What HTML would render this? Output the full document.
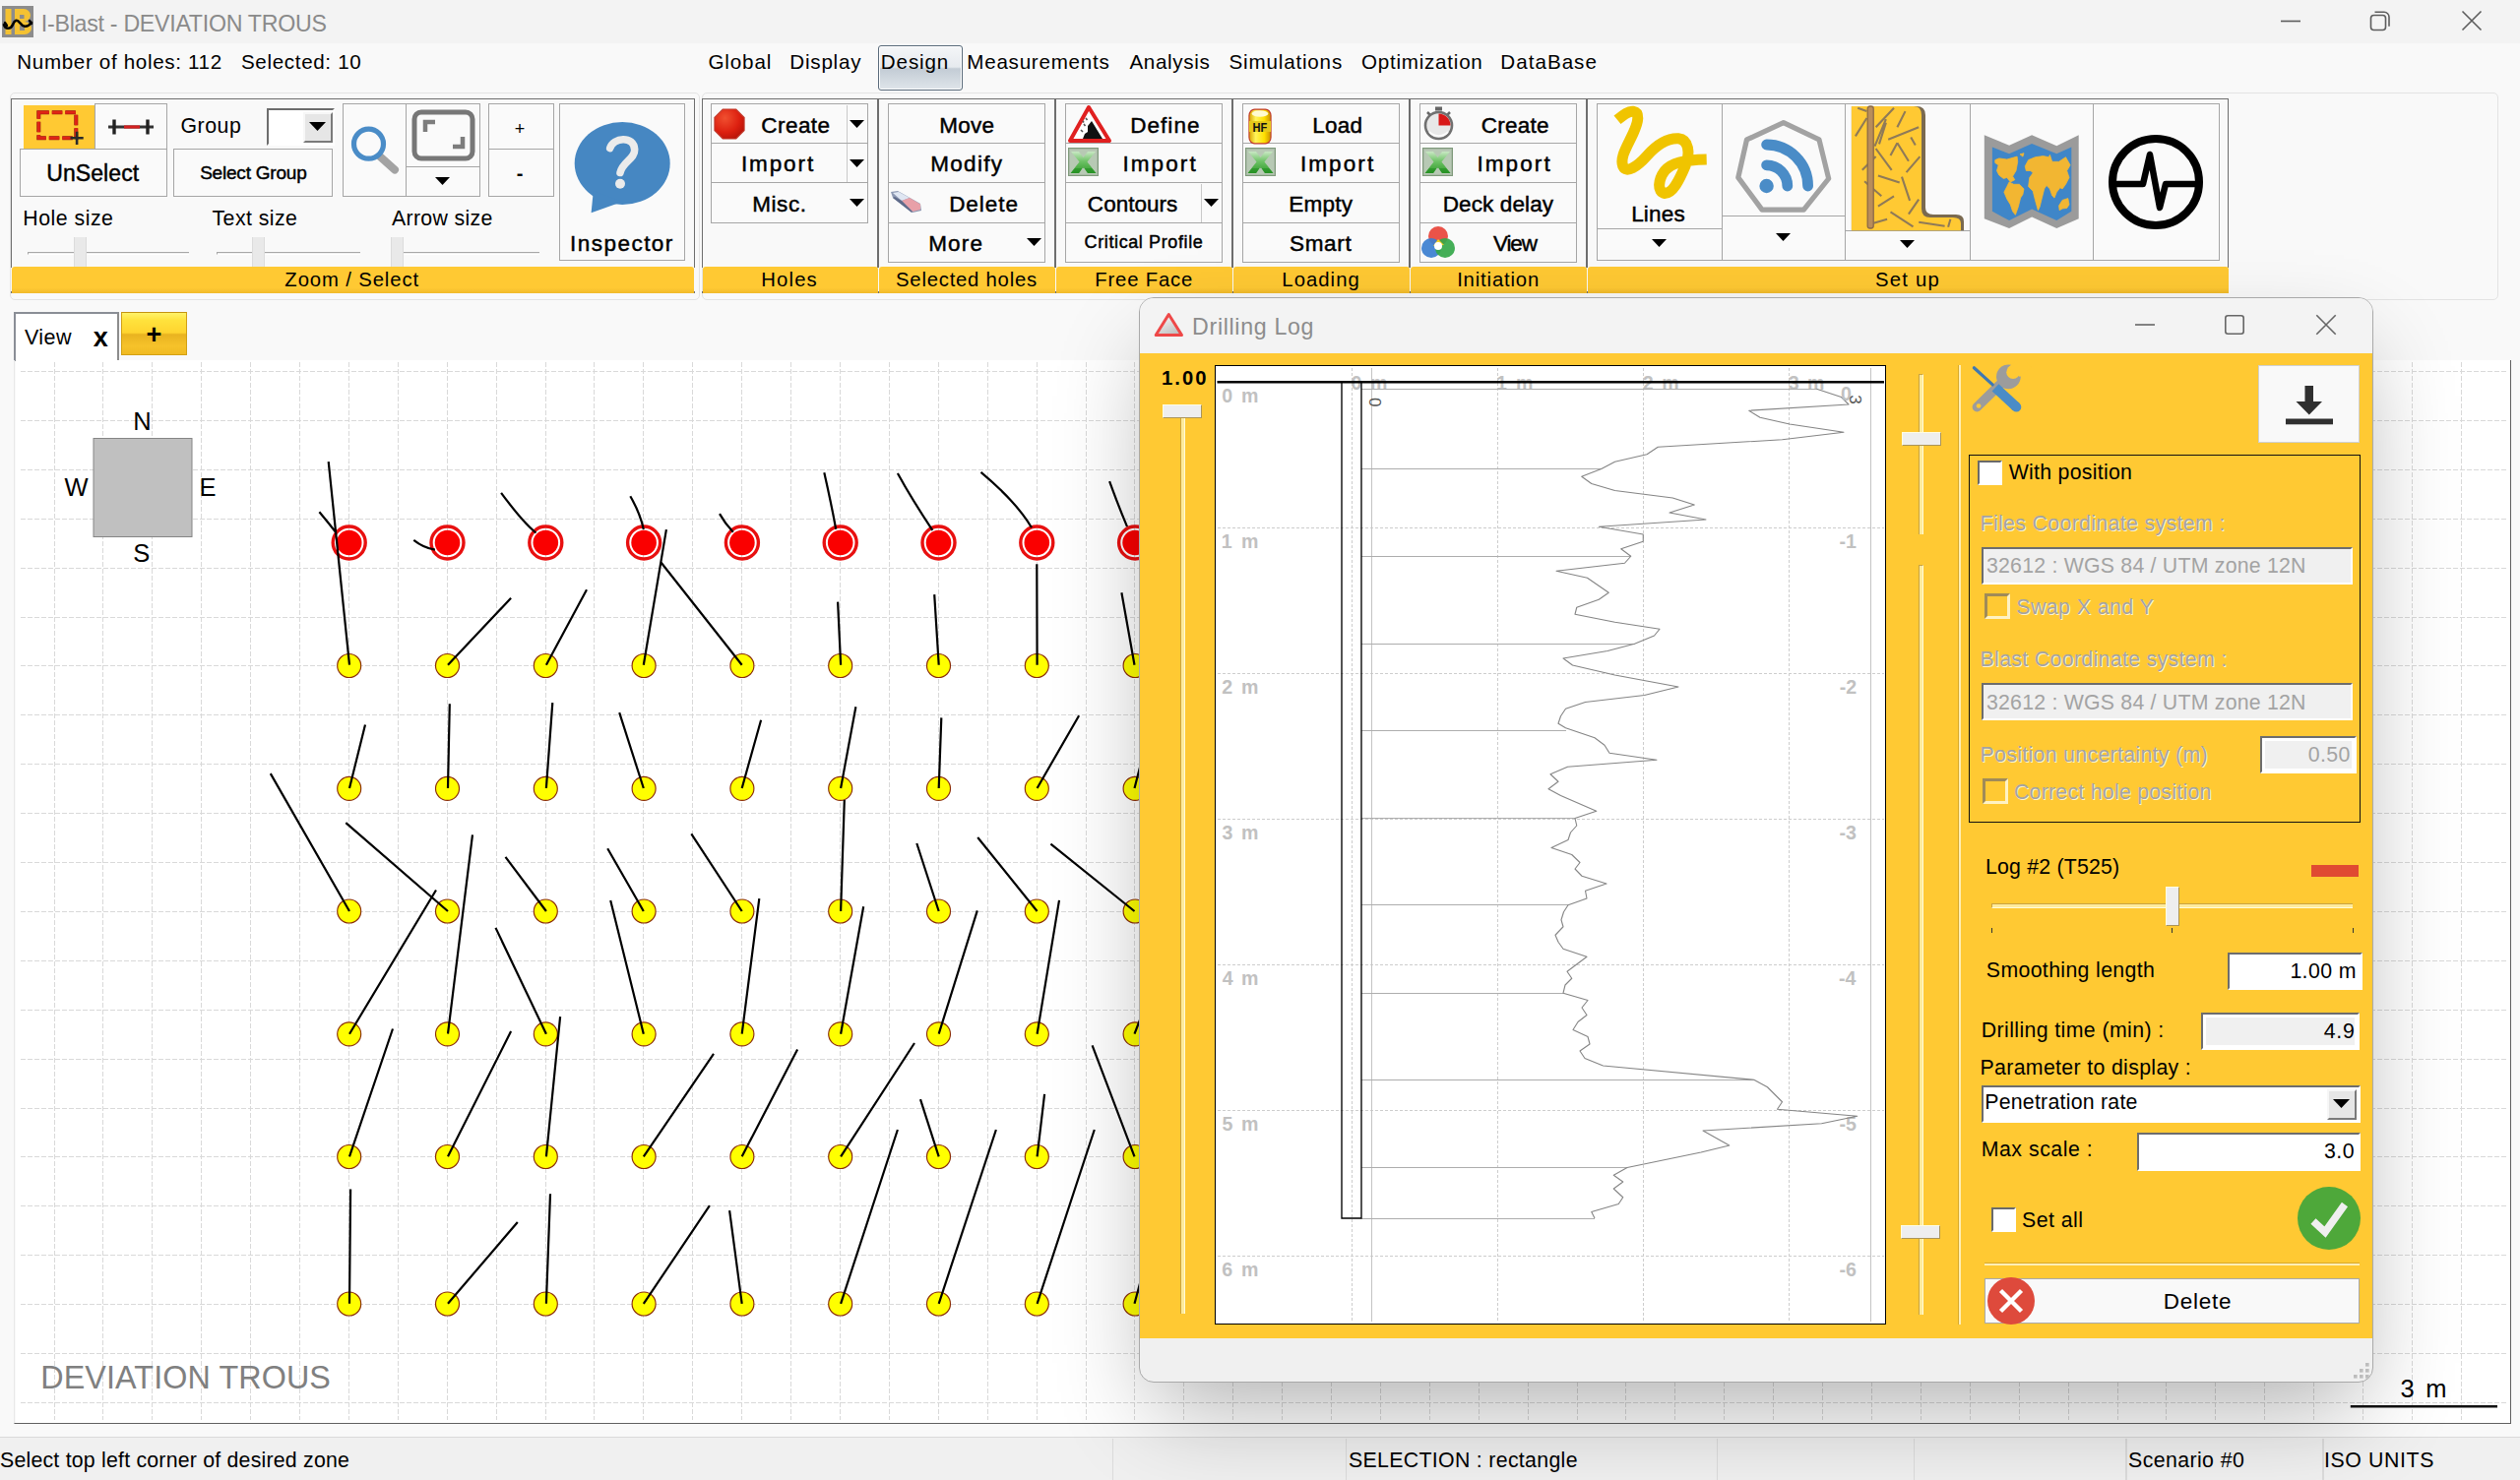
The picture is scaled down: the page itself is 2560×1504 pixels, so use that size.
<!DOCTYPE html><html><head><meta charset="utf-8"><title>I-Blast</title><style>html,body{margin:0;padding:0}body{width:2560px;height:1504px;position:relative;overflow:hidden;font-family:"Liberation Sans",sans-serif;background:#f9f9f9}</style></head><body>
<div style="position:absolute;left:0.00px;top:0.00px;width:2560.00px;height:44.00px;background:#f3f3f3;"></div>
<svg style="position:absolute;left:2.00px;top:6.00px;" width="32.00" height="32.00" viewBox="0 0 32 32" preserveAspectRatio="none"><rect x="0" y="0" width="32" height="32" fill="#8c8c8c"/><rect x="3.5" y="3" width="6" height="26" fill="#f5c232"/><path d="M13 3 h9 a7 6.5 0 0 1 0 13 h-9 z M13 16 h10 a7 6.5 0 0 1 0 13 h-10 z" fill="#f5c232"/><path d="M18 9 h4.5 v4 h-4.5 z M18 20 h5 v5 h-5 z" fill="#8c8c8c"/><path d="M2 19 c1 5 7 5 9 0 c1.5 -4 4 -6 7 -2 c3 4 7 6 12 0" fill="none" stroke="#000" stroke-width="2.6" stroke-linecap="round"/><path d="M3 17 l2 3 M28 15 l2 3" fill="none" stroke="#000" stroke-width="2.4" stroke-linecap="round"/></svg>
<span style="position:absolute;left:41.86px;top:11.00px;font-size:23.20px;font-weight:400;color:#8a8a8a;letter-spacing:-0.279px;white-space:pre;line-height:normal;">I-Blast - DEVIATION TROUS</span>
<svg style="position:absolute;left:2310.00px;top:5.00px;" width="240.00" height="34.00" viewBox="0 0 240 34" preserveAspectRatio="none"><path d="M7 16.5 h20" stroke="#5c5c5c" stroke-width="1.6" fill="none"/><rect x="98.5" y="10.5" width="15" height="15" rx="3" fill="none" stroke="#5c5c5c" stroke-width="1.6"/><path d="M102.5 7.3 h9.5 a5 5 0 0 1 5 5 v9.5" fill="none" stroke="#5c5c5c" stroke-width="1.6"/><path d="M191.5 6.5 l19 19 M210.5 6.5 l-19 19" stroke="#5c5c5c" stroke-width="1.6" fill="none"/></svg>
<div style="position:absolute;left:0.00px;top:44.00px;width:2560.00px;height:1460.00px;background:#f9f9f9;"></div>
<span style="position:absolute;left:17.31px;top:51.36px;font-size:20.60px;font-weight:400;color:#000;letter-spacing:0.658px;white-space:pre;line-height:normal;">Number of holes: 112   Selected: 10</span>
<div style="position:absolute;left:892.00px;top:45.50px;width:86.00px;height:46.50px;box-sizing:border-box;border:1.5px solid #5a6b7b;border-radius:3px;background:linear-gradient(#f4f6f8 0%,#e6eaee 48%,#c3ccd5 52%,#dfe5ea 100%);box-shadow:inset 0 0 0 1px #fff;"></div>
<span style="position:absolute;left:719.46px;top:51.36px;font-size:20.60px;font-weight:400;color:#000;letter-spacing:0.873px;white-space:pre;line-height:normal;">Global</span>
<span style="position:absolute;left:802.31px;top:51.36px;font-size:20.60px;font-weight:400;color:#000;letter-spacing:0.781px;white-space:pre;line-height:normal;">Display</span>
<span style="position:absolute;left:894.81px;top:51.36px;font-size:20.60px;font-weight:400;color:#000;letter-spacing:0.881px;white-space:pre;line-height:normal;">Design</span>
<span style="position:absolute;left:982.31px;top:51.36px;font-size:20.60px;font-weight:400;color:#000;letter-spacing:0.745px;white-space:pre;line-height:normal;">Measurements</span>
<span style="position:absolute;left:1147.46px;top:51.36px;font-size:20.60px;font-weight:400;color:#000;letter-spacing:0.654px;white-space:pre;line-height:normal;">Analysis</span>
<span style="position:absolute;left:1248.56px;top:51.36px;font-size:20.60px;font-weight:400;color:#000;letter-spacing:0.820px;white-space:pre;line-height:normal;">Simulations</span>
<span style="position:absolute;left:1383.02px;top:51.36px;font-size:20.60px;font-weight:400;color:#000;letter-spacing:0.757px;white-space:pre;line-height:normal;">Optimization</span>
<span style="position:absolute;left:1524.31px;top:51.36px;font-size:20.60px;font-weight:400;color:#000;letter-spacing:1.020px;white-space:pre;line-height:normal;">DataBase</span>
<div style="position:absolute;left:10.00px;top:93.50px;width:701.00px;height:211.00px;box-sizing:border-box;border:1.5px solid #e3e3e3;border-radius:5px;background:#f9f9f9;"></div>
<div style="position:absolute;left:712.50px;top:93.50px;width:1825.00px;height:211.00px;box-sizing:border-box;border:1.5px solid #e3e3e3;border-radius:5px;background:#f9f9f9;"></div>
<div style="position:absolute;left:10.50px;top:99.50px;width:695.00px;height:172.00px;box-sizing:border-box;border:1.5px solid #6e6e6e;border-bottom:none;"></div>
<div style="position:absolute;left:10.50px;top:295.50px;width:1.50px;height:2.50px;background:#6e6e6e;"></div>
<div style="position:absolute;left:704.00px;top:295.50px;width:1.50px;height:2.50px;background:#6e6e6e;"></div>
<div style="position:absolute;left:11.70px;top:270.50px;width:693.40px;height:27.00px;background:linear-gradient(#ffc933 0%,#ffc933 80%,#f0b92a 100%);border-radius:3px 3px 0 0;"></div>
<span style="position:absolute;left:289.36px;top:272.63px;font-size:20.30px;font-weight:400;color:#000;letter-spacing:0.880px;white-space:pre;line-height:normal;">Zoom / Select</span>
<div style="position:absolute;left:713.00px;top:99.50px;width:179.00px;height:172.00px;box-sizing:border-box;border:1.5px solid #6e6e6e;border-bottom:none;"></div>
<div style="position:absolute;left:713.00px;top:295.50px;width:1.50px;height:2.50px;background:#6e6e6e;"></div>
<div style="position:absolute;left:890.50px;top:295.50px;width:1.50px;height:2.50px;background:#6e6e6e;"></div>
<div style="position:absolute;left:714.20px;top:270.50px;width:177.40px;height:27.00px;background:linear-gradient(#ffc933 0%,#ffc933 80%,#f0b92a 100%);border-radius:3px 3px 0 0;"></div>
<span style="position:absolute;left:773.33px;top:272.63px;font-size:20.30px;font-weight:400;color:#000;letter-spacing:1.125px;white-space:pre;line-height:normal;">Holes</span>
<div style="position:absolute;left:892.00px;top:99.50px;width:180.00px;height:172.00px;box-sizing:border-box;border:1.5px solid #6e6e6e;border-bottom:none;"></div>
<div style="position:absolute;left:892.00px;top:295.50px;width:1.50px;height:2.50px;background:#6e6e6e;"></div>
<div style="position:absolute;left:1070.50px;top:295.50px;width:1.50px;height:2.50px;background:#6e6e6e;"></div>
<div style="position:absolute;left:893.20px;top:270.50px;width:178.40px;height:27.00px;background:linear-gradient(#ffc933 0%,#ffc933 80%,#f0b92a 100%);border-radius:3px 3px 0 0;"></div>
<span style="position:absolute;left:910.08px;top:272.63px;font-size:20.30px;font-weight:400;color:#000;letter-spacing:0.768px;white-space:pre;line-height:normal;">Selected holes</span>
<div style="position:absolute;left:1072.00px;top:99.50px;width:180.00px;height:172.00px;box-sizing:border-box;border:1.5px solid #6e6e6e;border-bottom:none;"></div>
<div style="position:absolute;left:1072.00px;top:295.50px;width:1.50px;height:2.50px;background:#6e6e6e;"></div>
<div style="position:absolute;left:1250.50px;top:295.50px;width:1.50px;height:2.50px;background:#6e6e6e;"></div>
<div style="position:absolute;left:1073.20px;top:270.50px;width:178.40px;height:27.00px;background:linear-gradient(#ffc933 0%,#ffc933 80%,#f0b92a 100%);border-radius:3px 3px 0 0;"></div>
<span style="position:absolute;left:1112.33px;top:272.63px;font-size:20.30px;font-weight:400;color:#000;letter-spacing:0.820px;white-space:pre;line-height:normal;">Free Face</span>
<div style="position:absolute;left:1252.00px;top:99.50px;width:180.00px;height:172.00px;box-sizing:border-box;border:1.5px solid #6e6e6e;border-bottom:none;"></div>
<div style="position:absolute;left:1252.00px;top:295.50px;width:1.50px;height:2.50px;background:#6e6e6e;"></div>
<div style="position:absolute;left:1430.50px;top:295.50px;width:1.50px;height:2.50px;background:#6e6e6e;"></div>
<div style="position:absolute;left:1253.20px;top:270.50px;width:178.40px;height:27.00px;background:linear-gradient(#ffc933 0%,#ffc933 80%,#f0b92a 100%);border-radius:3px 3px 0 0;"></div>
<span style="position:absolute;left:1302.33px;top:272.63px;font-size:20.30px;font-weight:400;color:#000;letter-spacing:1.037px;white-space:pre;line-height:normal;">Loading</span>
<div style="position:absolute;left:1432.00px;top:99.50px;width:180.00px;height:172.00px;box-sizing:border-box;border:1.5px solid #6e6e6e;border-bottom:none;"></div>
<div style="position:absolute;left:1432.00px;top:295.50px;width:1.50px;height:2.50px;background:#6e6e6e;"></div>
<div style="position:absolute;left:1610.50px;top:295.50px;width:1.50px;height:2.50px;background:#6e6e6e;"></div>
<div style="position:absolute;left:1433.20px;top:270.50px;width:178.40px;height:27.00px;background:linear-gradient(#ffc933 0%,#ffc933 80%,#f0b92a 100%);border-radius:3px 3px 0 0;"></div>
<span style="position:absolute;left:1480.13px;top:272.63px;font-size:20.30px;font-weight:400;color:#000;letter-spacing:0.842px;white-space:pre;line-height:normal;">Initiation</span>
<div style="position:absolute;left:1612.00px;top:99.50px;width:652.00px;height:172.00px;box-sizing:border-box;border:1.5px solid #6e6e6e;border-bottom:none;"></div>
<div style="position:absolute;left:1612.00px;top:295.50px;width:1.50px;height:2.50px;background:#6e6e6e;"></div>
<div style="position:absolute;left:2262.50px;top:295.50px;width:1.50px;height:2.50px;background:#6e6e6e;"></div>
<div style="position:absolute;left:1613.20px;top:270.50px;width:650.40px;height:27.00px;background:linear-gradient(#ffc933 0%,#ffc933 80%,#f0b92a 100%);border-radius:3px 3px 0 0;"></div>
<span style="position:absolute;left:1905.08px;top:272.63px;font-size:20.30px;font-weight:400;color:#000;letter-spacing:1.217px;white-space:pre;line-height:normal;">Set up</span>
<div style="position:absolute;left:24.00px;top:107.00px;width:72.00px;height:44.00px;background:#ffc933;"></div>
<svg style="position:absolute;left:24.00px;top:107.00px;" width="72.00" height="44.00" viewBox="0 0 72 44" preserveAspectRatio="none"><rect x="15.3" y="7.3" width="38" height="26" fill="none" stroke="#8a1a10" stroke-width="4" stroke-dasharray="10.5 3"/><rect x="15.3" y="7.3" width="38" height="26" fill="none" stroke="#e02414" stroke-width="3" stroke-dasharray="10.5 3"/><path d="M47.5 33.3 h13.2 M54.1 26.7 v13.2" stroke="#2a2a2a" stroke-width="2.6" fill="none"/></svg>
<div style="position:absolute;left:96.00px;top:105.00px;width:74.00px;height:47.00px;box-sizing:border-box;border:1px solid #a6a6a6;background:#fafafa;"></div>
<svg style="position:absolute;left:96.00px;top:105.50px;" width="73.50" height="45.50" viewBox="0 0 73.5 45.5" preserveAspectRatio="none"><path d="M14 23 h46" stroke="#333" stroke-width="3" fill="none"/><path d="M30 23 h16" stroke="#d32020" stroke-width="3.2" fill="none"/><path d="M20 15.5 v15 M54 15.5 v15" stroke="#222" stroke-width="3.4" fill="none"/></svg>
<div style="position:absolute;left:20.00px;top:151.00px;width:150.00px;height:49.00px;box-sizing:border-box;border:1px solid #a6a6a6;background:#fafafa;"></div>
<span style="position:absolute;left:47.23px;top:163.19px;font-size:23.00px;font-weight:400;color:#000;letter-spacing:0.088px;white-space:pre;line-height:normal;-webkit-text-stroke:0.45px #000;">UnSelect</span>
<span style="position:absolute;left:183.43px;top:115.72px;font-size:21.30px;font-weight:400;color:#000;letter-spacing:0.567px;white-space:pre;line-height:normal;">Group</span>
<div style="position:absolute;left:270.50px;top:110.00px;width:69.00px;height:37.50px;box-sizing:border-box;background:#fff;border:2px solid;border-color:#6d6d6d #fff #fff #6d6d6d;"></div>
<div style="position:absolute;left:308.00px;top:114.00px;width:29.50px;height:30.50px;box-sizing:border-box;background:#e6e6e6;border:2px solid;border-color:#f7f7f7 #7a7a7a #7a7a7a #f7f7f7;"></div>
<svg style="position:absolute;left:314.00px;top:124.00px;" width="17.00" height="9.00" viewBox="0 0 17 9" preserveAspectRatio="none"><polygon points="0,0 17,0 8.5,9" fill="#000"/></svg>
<div style="position:absolute;left:176.00px;top:151.00px;width:162.00px;height:49.00px;box-sizing:border-box;border:1px solid #a6a6a6;background:#fafafa;"></div>
<span style="position:absolute;left:203.14px;top:164.81px;font-size:19.00px;font-weight:400;color:#000;letter-spacing:-0.203px;white-space:pre;line-height:normal;-webkit-text-stroke:0.45px #000;">Select Group</span>
<div style="position:absolute;left:348.00px;top:105.00px;width:65.00px;height:95.00px;box-sizing:border-box;border:1px solid #a6a6a6;background:#fafafa;"></div>
<svg style="position:absolute;left:348.00px;top:105.50px;" width="64.50" height="93.50" viewBox="0 0 64.5 93.5" preserveAspectRatio="none"><path d="M38.5 53.5 L53 66.5" stroke="#a3a3a3" stroke-width="8" stroke-linecap="round" fill="none"/><circle cx="26.5" cy="40.2" r="15" fill="none" stroke="#4a8cc7" stroke-width="5.2"/></svg>
<div style="position:absolute;left:412.00px;top:105.00px;width:76.00px;height:65.00px;box-sizing:border-box;border:1px solid #a6a6a6;background:#fafafa;"></div>
<svg style="position:absolute;left:412.50px;top:105.50px;" width="75.00" height="64.00" viewBox="0 0 75 64" preserveAspectRatio="none"><rect x="8" y="8" width="59" height="47" rx="7" fill="none" stroke="#777" stroke-width="5"/><path d="M19 28 v-10 h10 M57 33 v10 h-10" fill="none" stroke="#7d7d7d" stroke-width="4.5"/></svg>
<div style="position:absolute;left:412.00px;top:169.00px;width:76.00px;height:31.00px;box-sizing:border-box;border:1px solid #a6a6a6;background:#fafafa;"></div>
<svg style="position:absolute;left:442.00px;top:179.50px;" width="15.00" height="8.00" viewBox="0 0 15 8" preserveAspectRatio="none"><polygon points="0,0 15,0 7.5,8" fill="#000"/></svg>
<div style="position:absolute;left:496.00px;top:105.00px;width:67.00px;height:47.00px;box-sizing:border-box;border:1px solid #a6a6a6;background:#fafafa;"></div>
<div style="position:absolute;left:496.00px;top:151.00px;width:67.00px;height:49.00px;box-sizing:border-box;border:1px solid #a6a6a6;background:#fafafa;"></div>
<span style="position:absolute;left:522.75px;top:120.71px;font-size:18.00px;font-weight:400;color:#000;letter-spacing:0.000px;white-space:pre;line-height:normal;">+</span>
<span style="position:absolute;left:524.68px;top:164.90px;font-size:20.00px;font-weight:700;color:#000;letter-spacing:0.000px;white-space:pre;line-height:normal;">-</span>
<div style="position:absolute;left:568.00px;top:105.00px;width:128.00px;height:160.00px;box-sizing:border-box;border:1px solid #a6a6a6;background:#fafafa;"></div>
<svg style="position:absolute;left:568.00px;top:105.50px;" width="127.50" height="158.50" viewBox="0 0 127.5 158.5" preserveAspectRatio="none"><ellipse cx="64.2" cy="60.0" rx="48.5" ry="42" fill="#4687c2"/><path d="M34.8 87.9 L32.6 110.2 L64.2 98.9 Z" fill="#4687c2"/><path d="M51.7 44.6 C54.7 33.6 76.0 31.4 76.7 46.0 C77.1 55.6 64.2 58.5 62.0 69.5" fill="none" stroke="#ebebeb" stroke-width="7.6" stroke-linecap="round"/><circle cx="62.0" cy="80.8" r="5" fill="#ebebeb"/></svg>
<span style="position:absolute;left:578.92px;top:235.34px;font-size:22.50px;font-weight:400;color:#000;letter-spacing:1.488px;white-space:pre;line-height:normal;-webkit-text-stroke:0.45px #000;">Inspector</span>
<span style="position:absolute;left:23.25px;top:210.22px;font-size:21.30px;font-weight:400;color:#000;letter-spacing:0.511px;white-space:pre;line-height:normal;">Hole size</span>
<span style="position:absolute;left:215.52px;top:210.22px;font-size:21.30px;font-weight:400;color:#000;letter-spacing:0.446px;white-space:pre;line-height:normal;">Text size</span>
<span style="position:absolute;left:397.96px;top:210.22px;font-size:21.30px;font-weight:400;color:#000;letter-spacing:0.341px;white-space:pre;line-height:normal;">Arrow size</span>
<div style="position:absolute;left:28.00px;top:255.50px;width:164.00px;height:3.50px;box-sizing:border-box;border-top:1.2px solid #a8a8a8;border-left:1.2px solid #a8a8a8;border-bottom:1px solid #fff;background:#f0f0f0;"></div>
<div style="position:absolute;left:75.00px;top:240.50px;width:13.00px;height:30.00px;background:#e9e9e9;box-sizing:border-box;border-left:1px solid #dcdcdc;border-right:1px solid #dcdcdc;"></div>
<div style="position:absolute;left:220.00px;top:255.50px;width:146.00px;height:3.50px;box-sizing:border-box;border-top:1.2px solid #a8a8a8;border-left:1.2px solid #a8a8a8;border-bottom:1px solid #fff;background:#f0f0f0;"></div>
<div style="position:absolute;left:255.50px;top:240.50px;width:13.00px;height:30.00px;background:#e9e9e9;box-sizing:border-box;border-left:1px solid #dcdcdc;border-right:1px solid #dcdcdc;"></div>
<div style="position:absolute;left:397.00px;top:255.50px;width:150.50px;height:3.50px;box-sizing:border-box;border-top:1.2px solid #a8a8a8;border-left:1.2px solid #a8a8a8;border-bottom:1px solid #fff;background:#f0f0f0;"></div>
<div style="position:absolute;left:397.00px;top:240.50px;width:13.00px;height:30.00px;background:#e9e9e9;box-sizing:border-box;border-left:1px solid #dcdcdc;border-right:1px solid #dcdcdc;"></div>
<div style="position:absolute;left:722.00px;top:105.00px;width:160.00px;height:41.00px;box-sizing:border-box;border:1px solid #a6a6a6;background:#fafafa;"></div>
<div style="position:absolute;left:860.00px;top:106.50px;width:1.20px;height:38.50px;background:#c9c9c9;"></div>
<span style="position:absolute;left:773.36px;top:114.64px;font-size:22.50px;font-weight:400;color:#000;letter-spacing:0.422px;white-space:pre;line-height:normal;-webkit-text-stroke:0.45px #000;">Create</span>
<svg style="position:absolute;left:863.00px;top:122.00px;" width="15.00" height="8.00" viewBox="0 0 15 8" preserveAspectRatio="none"><polygon points="0,0 15,0 7.5,8" fill="#000"/></svg>
<div style="position:absolute;left:722.00px;top:145.00px;width:160.00px;height:41.00px;box-sizing:border-box;border:1px solid #a6a6a6;background:#fafafa;"></div>
<div style="position:absolute;left:860.00px;top:146.00px;width:1.20px;height:39.50px;background:#c9c9c9;"></div>
<span style="position:absolute;left:752.92px;top:154.14px;font-size:22.50px;font-weight:400;color:#000;letter-spacing:1.895px;white-space:pre;line-height:normal;-webkit-text-stroke:0.45px #000;">Import</span>
<svg style="position:absolute;left:863.00px;top:161.50px;" width="15.00" height="8.00" viewBox="0 0 15 8" preserveAspectRatio="none"><polygon points="0,0 15,0 7.5,8" fill="#000"/></svg>
<div style="position:absolute;left:722.00px;top:185.00px;width:160.00px;height:42.00px;box-sizing:border-box;border:1px solid #a6a6a6;background:#fafafa;"></div>
<span style="position:absolute;left:764.15px;top:194.64px;font-size:22.50px;font-weight:400;color:#000;letter-spacing:0.602px;white-space:pre;line-height:normal;-webkit-text-stroke:0.45px #000;">Misc.</span>
<svg style="position:absolute;left:863.00px;top:202.00px;" width="15.00" height="8.00" viewBox="0 0 15 8" preserveAspectRatio="none"><polygon points="0,0 15,0 7.5,8" fill="#000"/></svg>
<svg style="position:absolute;left:725.00px;top:110.00px;" width="32.00" height="32.00" viewBox="0 0 34 34" preserveAspectRatio="none"><defs><radialGradient id="rg1" cx="0.35" cy="0.3" r="0.8"><stop offset="0" stop-color="#f05030"/><stop offset="0.6" stop-color="#dd2010"/><stop offset="1" stop-color="#b31208"/></radialGradient></defs><polygon points="10,1 24,1 33,10 33,24 24,33 10,33 1,24 1,10" fill="url(#rg1)" stroke="#c0392b" stroke-width="1.2" stroke-linejoin="round"/></svg>
<div style="position:absolute;left:902.00px;top:105.00px;width:160.00px;height:41.00px;box-sizing:border-box;border:1px solid #a6a6a6;background:#fafafa;"></div>
<span style="position:absolute;left:954.15px;top:114.64px;font-size:22.50px;font-weight:400;color:#000;letter-spacing:0.275px;white-space:pre;line-height:normal;-webkit-text-stroke:0.45px #000;">Move</span>
<div style="position:absolute;left:902.00px;top:145.00px;width:160.00px;height:41.00px;box-sizing:border-box;border:1px solid #a6a6a6;background:#fafafa;"></div>
<span style="position:absolute;left:945.15px;top:154.14px;font-size:22.50px;font-weight:400;color:#000;letter-spacing:1.324px;white-space:pre;line-height:normal;-webkit-text-stroke:0.45px #000;">Modify</span>
<div style="position:absolute;left:902.00px;top:185.00px;width:160.00px;height:42.00px;box-sizing:border-box;border:1px solid #a6a6a6;background:#fafafa;"></div>
<span style="position:absolute;left:964.15px;top:194.64px;font-size:22.50px;font-weight:400;color:#000;letter-spacing:0.961px;white-space:pre;line-height:normal;-webkit-text-stroke:0.45px #000;">Delete</span>
<div style="position:absolute;left:902.00px;top:226.00px;width:160.00px;height:41.00px;box-sizing:border-box;border:1px solid #a6a6a6;background:#fafafa;"></div>
<span style="position:absolute;left:943.15px;top:235.14px;font-size:22.50px;font-weight:400;color:#000;letter-spacing:1.194px;white-space:pre;line-height:normal;-webkit-text-stroke:0.45px #000;">More</span>
<svg style="position:absolute;left:1043.00px;top:242.00px;" width="15.00" height="8.00" viewBox="0 0 15 8" preserveAspectRatio="none"><polygon points="0,0 15,0 7.5,8" fill="#000"/></svg>
<svg style="position:absolute;left:904.00px;top:192.00px;" width="34.00" height="26.00" viewBox="0 0 34 26" preserveAspectRatio="none"><path d="M1 3 L8 2 L31 15 L32 22 L23 24 L3 9 Z" fill="#8d99b3"/><path d="M3 4 L9 3 L20 9 L12 12 Z" fill="#dfe6f2"/><path d="M12 12 L20 9 L31 15.5 L31 21 L23 23 Z" fill="#e8a0a8"/><path d="M5 8 L12 12 L23 23 L22 24 L3 9 Z" fill="#5f6b8a"/></svg>
<div style="position:absolute;left:1082.00px;top:105.00px;width:160.00px;height:41.00px;box-sizing:border-box;border:1px solid #a6a6a6;background:#fafafa;"></div>
<span style="position:absolute;left:1148.15px;top:114.64px;font-size:22.50px;font-weight:400;color:#000;letter-spacing:1.061px;white-space:pre;line-height:normal;-webkit-text-stroke:0.45px #000;">Define</span>
<div style="position:absolute;left:1082.00px;top:145.00px;width:160.00px;height:41.00px;box-sizing:border-box;border:1px solid #a6a6a6;background:#fafafa;"></div>
<span style="position:absolute;left:1140.42px;top:154.14px;font-size:22.50px;font-weight:400;color:#000;letter-spacing:2.095px;white-space:pre;line-height:normal;-webkit-text-stroke:0.45px #000;">Import</span>
<div style="position:absolute;left:1082.00px;top:185.00px;width:160.00px;height:42.00px;box-sizing:border-box;border:1px solid #a6a6a6;background:#fafafa;"></div>
<span style="position:absolute;left:1104.86px;top:194.64px;font-size:22.50px;font-weight:400;color:#000;letter-spacing:0.023px;white-space:pre;line-height:normal;-webkit-text-stroke:0.45px #000;">Contours</span>
<div style="position:absolute;left:1082.00px;top:226.00px;width:160.00px;height:41.00px;box-sizing:border-box;border:1px solid #a6a6a6;background:#fafafa;"></div>
<span style="position:absolute;left:1101.59px;top:236.21px;font-size:18.00px;font-weight:400;color:#000;letter-spacing:0.613px;white-space:pre;line-height:normal;-webkit-text-stroke:0.45px #000;">Critical Profile</span>
<div style="position:absolute;left:1220.00px;top:186.50px;width:1.20px;height:39.50px;background:#c9c9c9;"></div>
<svg style="position:absolute;left:1223.00px;top:202.00px;" width="15.00" height="8.00" viewBox="0 0 15 8" preserveAspectRatio="none"><polygon points="0,0 15,0 7.5,8" fill="#000"/></svg>
<svg style="position:absolute;left:1083.50px;top:106.00px;" width="46.00" height="40.00" viewBox="0 0 46 40" preserveAspectRatio="none"><path d="M22 3 L43 37 L3 37 Z" fill="#fff" stroke="#e02020" stroke-width="4" stroke-linejoin="round"/><path d="M25 17 L36 35 L16 35 L18 30 L21 28 L21 22 Z" fill="#111"/><path d="M19 14 l1.5 2 M17 20 l1.5 2 M14 26 l2 2 M16 17 l1 1.5" stroke="#555" stroke-width="1.6"/></svg>
<svg style="position:absolute;left:1085.00px;top:150.00px;" width="31.00" height="29.00" viewBox="0 0 31 29" preserveAspectRatio="none"><defs><linearGradient id="xg1085" x1="0" y1="0" x2="0" y2="1"><stop offset="0" stop-color="#c9e8c4"/><stop offset="0.45" stop-color="#6ec266"/><stop offset="1" stop-color="#2f9a2a"/></linearGradient></defs><rect x="0.5" y="0.5" width="30" height="28" fill="#a9b9a6" stroke="#7f9a7b"/><rect x="2" y="2" width="27" height="25" fill="#b7c9b4"/><path d="M3 4 L11 4 L15.5 10 L20 4 L28 4 L19.5 14.5 L28.5 26 L20 26 L15.5 19.5 L11 26 L2.5 26 L11.5 14.5 Z" fill="url(#xg1085)"/><path d="M3 26 L11 26 L15.5 19.5 L20 26 L28.5 26 L24 21 L7 21 Z" fill="#1f8c1f" opacity="0.55"/></svg>
<div style="position:absolute;left:1262.00px;top:105.00px;width:160.00px;height:41.00px;box-sizing:border-box;border:1px solid #a6a6a6;background:#fafafa;"></div>
<span style="position:absolute;left:1333.15px;top:114.64px;font-size:22.50px;font-weight:400;color:#000;letter-spacing:0.247px;white-space:pre;line-height:normal;-webkit-text-stroke:0.45px #000;">Load</span>
<div style="position:absolute;left:1262.00px;top:145.00px;width:160.00px;height:41.00px;box-sizing:border-box;border:1px solid #a6a6a6;background:#fafafa;"></div>
<span style="position:absolute;left:1320.92px;top:154.14px;font-size:22.50px;font-weight:400;color:#000;letter-spacing:2.095px;white-space:pre;line-height:normal;-webkit-text-stroke:0.45px #000;">Import</span>
<div style="position:absolute;left:1262.00px;top:185.00px;width:160.00px;height:42.00px;box-sizing:border-box;border:1px solid #a6a6a6;background:#fafafa;"></div>
<span style="position:absolute;left:1309.15px;top:194.64px;font-size:22.50px;font-weight:400;color:#000;letter-spacing:0.281px;white-space:pre;line-height:normal;-webkit-text-stroke:0.45px #000;">Empty</span>
<div style="position:absolute;left:1262.00px;top:226.00px;width:160.00px;height:41.00px;box-sizing:border-box;border:1px solid #a6a6a6;background:#fafafa;"></div>
<span style="position:absolute;left:1309.98px;top:235.14px;font-size:22.50px;font-weight:400;color:#000;letter-spacing:0.670px;white-space:pre;line-height:normal;-webkit-text-stroke:0.45px #000;">Smart</span>
<svg style="position:absolute;left:1265.00px;top:150.00px;" width="31.00" height="29.00" viewBox="0 0 31 29" preserveAspectRatio="none"><defs><linearGradient id="xg1265" x1="0" y1="0" x2="0" y2="1"><stop offset="0" stop-color="#c9e8c4"/><stop offset="0.45" stop-color="#6ec266"/><stop offset="1" stop-color="#2f9a2a"/></linearGradient></defs><rect x="0.5" y="0.5" width="30" height="28" fill="#a9b9a6" stroke="#7f9a7b"/><rect x="2" y="2" width="27" height="25" fill="#b7c9b4"/><path d="M3 4 L11 4 L15.5 10 L20 4 L28 4 L19.5 14.5 L28.5 26 L20 26 L15.5 19.5 L11 26 L2.5 26 L11.5 14.5 Z" fill="url(#xg1265)"/><path d="M3 26 L11 26 L15.5 19.5 L20 26 L28.5 26 L24 21 L7 21 Z" fill="#1f8c1f" opacity="0.55"/></svg>
<svg style="position:absolute;left:1268.00px;top:109.50px;" width="24.00" height="37.00" viewBox="0 0 26 34" preserveAspectRatio="none"><defs><linearGradient id="hf" x1="0" y1="0" x2="1" y2="0"><stop offset="0" stop-color="#d9a400"/><stop offset="0.3" stop-color="#fff45a"/><stop offset="0.7" stop-color="#ffe000"/><stop offset="1" stop-color="#c98f00"/></linearGradient></defs><rect x="1" y="1" width="24" height="32" rx="6" fill="url(#hf)" stroke="#c0392b" stroke-width="1.2"/><ellipse cx="13" cy="5" rx="9" ry="3" fill="#fffbd0"/><rect x="1" y="12" width="24" height="10" fill="#e6c81a"/><text x="13" y="22" font-family="Liberation Sans" font-weight="700" font-size="12" text-anchor="middle" fill="#111">HF</text></svg>
<div style="position:absolute;left:1442.00px;top:105.00px;width:160.00px;height:41.00px;box-sizing:border-box;border:1px solid #a6a6a6;background:#fafafa;"></div>
<span style="position:absolute;left:1504.86px;top:114.64px;font-size:22.50px;font-weight:400;color:#000;letter-spacing:0.222px;white-space:pre;line-height:normal;-webkit-text-stroke:0.45px #000;">Create</span>
<div style="position:absolute;left:1442.00px;top:145.00px;width:160.00px;height:41.00px;box-sizing:border-box;border:1px solid #a6a6a6;background:#fafafa;"></div>
<span style="position:absolute;left:1500.42px;top:154.14px;font-size:22.50px;font-weight:400;color:#000;letter-spacing:2.095px;white-space:pre;line-height:normal;-webkit-text-stroke:0.45px #000;">Import</span>
<div style="position:absolute;left:1442.00px;top:185.00px;width:160.00px;height:42.00px;box-sizing:border-box;border:1px solid #a6a6a6;background:#fafafa;"></div>
<span style="position:absolute;left:1465.65px;top:194.64px;font-size:22.50px;font-weight:400;color:#000;letter-spacing:0.121px;white-space:pre;line-height:normal;-webkit-text-stroke:0.45px #000;">Deck delay</span>
<div style="position:absolute;left:1442.00px;top:226.00px;width:160.00px;height:41.00px;box-sizing:border-box;border:1px solid #a6a6a6;background:#fafafa;"></div>
<span style="position:absolute;left:1516.90px;top:235.14px;font-size:22.50px;font-weight:400;color:#000;letter-spacing:-1.106px;white-space:pre;line-height:normal;-webkit-text-stroke:0.45px #000;">View</span>
<svg style="position:absolute;left:1445.00px;top:150.00px;" width="31.00" height="29.00" viewBox="0 0 31 29" preserveAspectRatio="none"><defs><linearGradient id="xg1445" x1="0" y1="0" x2="0" y2="1"><stop offset="0" stop-color="#c9e8c4"/><stop offset="0.45" stop-color="#6ec266"/><stop offset="1" stop-color="#2f9a2a"/></linearGradient></defs><rect x="0.5" y="0.5" width="30" height="28" fill="#a9b9a6" stroke="#7f9a7b"/><rect x="2" y="2" width="27" height="25" fill="#b7c9b4"/><path d="M3 4 L11 4 L15.5 10 L20 4 L28 4 L19.5 14.5 L28.5 26 L20 26 L15.5 19.5 L11 26 L2.5 26 L11.5 14.5 Z" fill="url(#xg1445)"/><path d="M3 26 L11 26 L15.5 19.5 L20 26 L28.5 26 L24 21 L7 21 Z" fill="#1f8c1f" opacity="0.55"/></svg>
<svg style="position:absolute;left:1446.00px;top:108.00px;" width="32.00" height="35.00" viewBox="0 0 32 35" preserveAspectRatio="none"><rect x="12" y="0.5" width="7" height="4" fill="#666"/><path d="M4 6 l3 3 M27 6 l-3 3" stroke="#666" stroke-width="2.5"/><circle cx="15.5" cy="19.5" r="13.5" fill="#e8e8e8" stroke="#707070" stroke-width="2.6"/><path d="M15.5 19.5 L15.5 7.5 A12 12 0 0 1 27.5 19.5 Z" fill="#d81818"/><path d="M6 26 A13 13 0 0 0 25 26" fill="none" stroke="#fff" stroke-width="2" opacity="0.8"/></svg>
<svg style="position:absolute;left:1444.00px;top:229.00px;" width="34.00" height="34.00" viewBox="0 0 34 34" preserveAspectRatio="none"><circle cx="17" cy="11" r="10" fill="#e8443a" opacity="0.92"/><circle cx="10" cy="23" r="10" fill="#3b7fd0" opacity="0.92"/><circle cx="24" cy="23" r="10" fill="#35a84a" opacity="0.92"/><path d="M17 14 L23 20 L12 21 Z" fill="#f2d020"/><circle cx="17" cy="21" r="4" fill="#fff"/></svg>
<div style="position:absolute;left:1622.00px;top:105.00px;width:128.00px;height:129.00px;box-sizing:border-box;border:1px solid #a6a6a6;background:#fafafa;"></div>
<div style="position:absolute;left:1622.00px;top:232.00px;width:128.00px;height:33.00px;box-sizing:border-box;border:1px solid #a6a6a6;background:#fafafa;"></div>
<div style="position:absolute;left:1749.00px;top:105.00px;width:126.00px;height:115.00px;box-sizing:border-box;border:1px solid #a6a6a6;background:#fafafa;"></div>
<div style="position:absolute;left:1749.00px;top:219.00px;width:126.00px;height:46.00px;box-sizing:border-box;border:1px solid #a6a6a6;background:#fafafa;"></div>
<div style="position:absolute;left:1874.00px;top:105.00px;width:128.00px;height:131.00px;box-sizing:border-box;border:1px solid #a6a6a6;background:#fafafa;"></div>
<div style="position:absolute;left:1874.00px;top:234.00px;width:128.00px;height:31.00px;box-sizing:border-box;border:1px solid #a6a6a6;background:#fafafa;"></div>
<div style="position:absolute;left:2001.00px;top:105.00px;width:126.00px;height:160.00px;box-sizing:border-box;border:1px solid #a6a6a6;background:#fafafa;"></div>
<div style="position:absolute;left:2126.00px;top:105.00px;width:129.00px;height:160.00px;box-sizing:border-box;border:1px solid #a6a6a6;background:#fafafa;"></div>
<span style="position:absolute;left:1657.15px;top:205.14px;font-size:22.50px;font-weight:400;color:#000;letter-spacing:0.217px;white-space:pre;line-height:normal;-webkit-text-stroke:0.45px #000;">Lines</span>
<svg style="position:absolute;left:1678.00px;top:243.00px;" width="15.00" height="8.00" viewBox="0 0 15 8" preserveAspectRatio="none"><polygon points="0,0 15,0 7.5,8" fill="#000"/></svg>
<svg style="position:absolute;left:1803.50px;top:237.00px;" width="15.00" height="8.00" viewBox="0 0 15 8" preserveAspectRatio="none"><polygon points="0,0 15,0 7.5,8" fill="#000"/></svg>
<svg style="position:absolute;left:1930.00px;top:244.00px;" width="15.00" height="8.00" viewBox="0 0 15 8" preserveAspectRatio="none"><polygon points="0,0 15,0 7.5,8" fill="#000"/></svg>
<svg style="position:absolute;left:1630.00px;top:104.00px;" width="112.00" height="104.00" viewBox="0 0 112 104" preserveAspectRatio="none"><path d="M13.0 17.8 C19.9 12.1 24.5 8.6 29.0 9.2 C35.9 10.4 34.8 19.0 29.0 31.6 C23.3 44.2 15.3 55.7 18.7 64.9 C22.2 72.9 33.6 64.9 42.8 54.6 C52.0 44.2 63.5 36.2 75.0 36.8 C85.3 37.9 87.6 51.1 81.9 64.9 C76.1 78.7 69.2 92.5 61.2 92.5 C53.2 91.3 54.3 78.7 61.2 69.5 C68.1 61.5 79.6 58.6 103.7 58.0" fill="none" stroke="#f0c400" stroke-width="11" stroke-linecap="butt" stroke-linejoin="round"/></svg>
<svg style="position:absolute;left:1758.00px;top:120.00px;" width="112.00" height="104.00" viewBox="0 0 112 104" preserveAspectRatio="none"><polygon points="53.8,4.7 90.0,21.9 99.7,61.5 74.4,93.1 32.0,93.1 7.8,60.4 16.5,21.9" fill="none" stroke="#a2a2a2" stroke-width="5.2" stroke-linejoin="round"/><circle cx="36.6" cy="69.0" r="7.2" fill="#4a8cc7"/><path d="M36.6 47.8 A21.2 21.2 0 0 1 57.8 69.0" fill="none" stroke="#4a8cc7" stroke-width="10.8" stroke-linecap="round"/><path d="M36.6 27.0 A42 42 0 0 1 78.6 69.0" fill="none" stroke="#4a8cc7" stroke-width="10.8" stroke-linecap="round"/></svg>
<svg style="position:absolute;left:1880.00px;top:106.50px;" width="120.00" height="128.00" viewBox="0 0 120 128" preserveAspectRatio="none"><path d="M0.9 1 H67 Q76 1 76 10 V104 Q76 111 84 111 H107 Q115 111 115 118 V127.3 H0.9 Z" fill="#7a6a50"/><path d="M0.9 1 H64 Q72 1 72 10 V105 Q72 114 81 114 H104 Q112 114 112 120 V127.3 H0.9 Z" fill="#ffc933"/><path d="M4.9 31.4 L16.4 13.0 M7.2 2.7 L16.4 6.1 M24.5 41.7 L35.9 14.2 M25.6 22.2 L44.0 2.7 M29.0 39.4 L35.9 17.6 M47.4 22.2 L55.5 6.1 M38.2 34.8 L69.2 22.2 M61.2 32.5 L65.8 40.6 M40.5 50.9 L47.4 38.3 M47.4 38.3 L58.9 56.7 M25.6 44.0 L41.7 65.8 M56.6 68.1 L70.4 52.1 M11.8 65.8 L25.6 52.1 M27.9 71.6 L49.7 78.5 M52.0 72.7 L60.1 96.9 M14.1 77.3 L31.3 92.3 M27.9 102.6 L44.0 92.3 M58.9 110.6 L69.2 95.7 M40.5 108.3 L63.5 123.3 M23.3 119.8 L37.1 115.8 M69.2 118.7 L95.6 122.7 M99.1 123.8 L101.4 115.8" stroke="#8f7a58" stroke-width="2.1" fill="none"/><rect x="17.2" y="1" width="6" height="124" rx="2.5" fill="#b98d5a" stroke="#8a6a48" stroke-width="1.3"/></svg>
<svg style="position:absolute;left:2014.00px;top:135.00px;" width="100.00" height="100.00" viewBox="0 0 100 100" preserveAspectRatio="none"><polygon points="1.8,2.3 27.1,12.7 50.1,2.3 75.3,13.2 97.7,2.3 97.7,87.3 75.3,97.1 50.1,85.6 27.1,97.1 1.8,87.3" fill="#9b9b9b"/><polygon points="9.9,14.4 27.1,21.3 50.1,10.9 75.3,21.3 90.3,14.4 90.3,79.8 75.3,89.0 50.1,77.5 27.1,89.0 9.9,79.8" fill="#3f86c8"/><polygon points="12.8,27.6 16.8,25.9 24.8,27.0 35.1,24.1 35.7,29.3 34.0,38.5 30.6,44.2 32.8,47.7 28.3,50.0 24.8,45.4 21.4,46.5 16.8,43.1 14.5,38.5 16.2,32.8 12.8,30.5" fill="#f2b632" stroke="#f2b632" stroke-width="0.8" stroke-linejoin="round"/><polygon points="27.1,50.0 31.7,52.3 37.4,52.3 42.0,56.9 40.9,62.6 38.6,66.1 36.3,75.2 33.4,83.3 30.6,79.8 28.3,72.9 24.8,67.2 21.9,60.3 24.8,54.6" fill="#f2b632" stroke="#f2b632" stroke-width="0.8" stroke-linejoin="round"/><polygon points="38.0,21.8 42.0,20.7 40.9,24.1" fill="#f2b632" stroke="#f2b632" stroke-width="0.8" stroke-linejoin="round"/><polygon points="43.2,33.9 46.6,27.6 53.5,24.7 61.6,23.6 67.3,24.7 68.4,22.4 70.7,29.3 77.6,29.3 84.5,24.7 89.1,32.8 85.7,38.5 88.0,45.4 84.5,52.3 81.1,56.9 78.8,55.7 75.3,60.3 73.0,66.1 70.7,63.8 68.4,56.9 65.0,53.4 62.7,56.9 60.4,66.1 58.1,75.2 56.4,78.7 53.5,68.4 51.2,59.2 46.6,54.6 47.8,45.4 51.2,40.8 48.9,38.5 44.3,38.5" fill="#f2b632" stroke="#f2b632" stroke-width="0.8" stroke-linejoin="round"/><polygon points="77.6,74.1 81.1,68.4 86.8,66.6 88.0,72.9 85.7,76.4 81.1,77.0 78.2,78.7" fill="#f2b632" stroke="#f2b632" stroke-width="0.8" stroke-linejoin="round"/></svg>
<svg style="position:absolute;left:2140.00px;top:135.00px;" width="100.00" height="100.00" viewBox="0 0 100 100" preserveAspectRatio="none"><circle cx="50" cy="50" r="44" fill="none" stroke="#000" stroke-width="8"/><path d="M6 52 H37 L44 22 L54 76 L60 52 H94" fill="none" stroke="#000" stroke-width="6.5" stroke-linejoin="round" stroke-linecap="round"/></svg>
<div style="position:absolute;left:14.20px;top:317.00px;width:107.30px;height:50.00px;box-sizing:border-box;background:#fff;border:2px solid #8a8e96;border-bottom:none;border-right:2.5px solid #8c8c8c;"></div>
<span style="position:absolute;left:24.91px;top:331.04px;font-size:21.50px;font-weight:400;color:#000;letter-spacing:0.443px;white-space:pre;line-height:normal;">View</span>
<span style="position:absolute;left:94.82px;top:327.56px;font-size:27.00px;font-weight:700;color:#000;letter-spacing:0.000px;white-space:pre;line-height:normal;">x</span>
<div style="position:absolute;left:122.50px;top:317.00px;width:67.30px;height:44.00px;box-sizing:border-box;border:1.5px solid #d2a013;border-top-color:#c39410;background:linear-gradient(#fff36a 0%,#ffe23c 18%,#ffd42f 48%,#e9b320 52%,#f6c22a 80%,#f0ba22 100%);"></div>
<span style="position:absolute;left:148.40px;top:325.06px;font-size:27.00px;font-weight:700;color:#000;letter-spacing:0.000px;white-space:pre;line-height:normal;">+</span>
<div style="position:absolute;left:15.50px;top:366.00px;width:2535.00px;height:1079.50px;background:#fff;"></div>
<svg style="position:absolute;left:15.50px;top:366.00px;" width="2535.00" height="1079.50" viewBox="0 0 2535 1079.5" preserveAspectRatio="none"><path d="M39.00 2.00 V1076.50 M88.91 2.00 V1076.50 M138.81 2.00 V1076.50 M188.72 2.00 V1076.50 M238.62 2.00 V1076.50 M288.52 2.00 V1076.50 M338.43 2.00 V1076.50 M388.33 2.00 V1076.50 M438.24 2.00 V1076.50 M488.14 2.00 V1076.50 M538.05 2.00 V1076.50 M587.95 2.00 V1076.50 M637.86 2.00 V1076.50 M687.76 2.00 V1076.50 M737.67 2.00 V1076.50 M787.57 2.00 V1076.50 M837.48 2.00 V1076.50 M887.38 2.00 V1076.50 M937.29 2.00 V1076.50 M987.19 2.00 V1076.50 M1037.10 2.00 V1076.50 M1087.00 2.00 V1076.50 M1136.91 2.00 V1076.50 M1186.81 2.00 V1076.50 M1236.72 2.00 V1076.50 M1286.62 2.00 V1076.50 M1336.53 2.00 V1076.50 M1386.43 2.00 V1076.50 M1436.34 2.00 V1076.50 M1486.24 2.00 V1076.50 M1536.15 2.00 V1076.50 M1586.05 2.00 V1076.50 M1635.96 2.00 V1076.50 M1685.86 2.00 V1076.50 M1735.77 2.00 V1076.50 M1785.67 2.00 V1076.50 M1835.58 2.00 V1076.50 M1885.48 2.00 V1076.50 M1935.39 2.00 V1076.50 M1985.29 2.00 V1076.50 M2035.20 2.00 V1076.50 M2085.10 2.00 V1076.50 M2135.01 2.00 V1076.50 M2184.91 2.00 V1076.50 M2234.82 2.00 V1076.50 M2284.73 2.00 V1076.50 M2334.63 2.00 V1076.50 M2384.54 2.00 V1076.50 M2434.44 2.00 V1076.50 M2484.35 2.00 V1076.50 M5.00 11.50 H2532.00 M5.00 61.40 H2532.00 M5.00 111.30 H2532.00 M5.00 161.20 H2532.00 M5.00 211.10 H2532.00 M5.00 261.00 H2532.00 M5.00 310.90 H2532.00 M5.00 360.80 H2532.00 M5.00 410.70 H2532.00 M5.00 460.60 H2532.00 M5.00 510.50 H2532.00 M5.00 560.40 H2532.00 M5.00 610.30 H2532.00 M5.00 660.20 H2532.00 M5.00 710.10 H2532.00 M5.00 760.00 H2532.00 M5.00 809.90 H2532.00 M5.00 859.80 H2532.00 M5.00 909.70 H2532.00 M5.00 959.60 H2532.00 M5.00 1009.50 H2532.00 M5.00 1059.40 H2532.00" stroke="#d9d9d9" stroke-width="1" stroke-dasharray="5 2" fill="none" shape-rendering="crispEdges"/><rect x="79.00" y="79.50" width="100" height="100" fill="#c0c0c0" stroke="#858585" stroke-width="1"/><circle cx="338.70" cy="185.50" r="16.5" fill="none" stroke="#e81010" stroke-width="3.4"/><circle cx="338.70" cy="185.50" r="12.8" fill="#fa0000"/><circle cx="438.50" cy="185.50" r="16.5" fill="none" stroke="#e81010" stroke-width="3.4"/><circle cx="438.50" cy="185.50" r="12.8" fill="#fa0000"/><circle cx="538.30" cy="185.50" r="16.5" fill="none" stroke="#e81010" stroke-width="3.4"/><circle cx="538.30" cy="185.50" r="12.8" fill="#fa0000"/><circle cx="638.10" cy="185.50" r="16.5" fill="none" stroke="#e81010" stroke-width="3.4"/><circle cx="638.10" cy="185.50" r="12.8" fill="#fa0000"/><circle cx="737.90" cy="185.50" r="16.5" fill="none" stroke="#e81010" stroke-width="3.4"/><circle cx="737.90" cy="185.50" r="12.8" fill="#fa0000"/><circle cx="837.70" cy="185.50" r="16.5" fill="none" stroke="#e81010" stroke-width="3.4"/><circle cx="837.70" cy="185.50" r="12.8" fill="#fa0000"/><circle cx="937.50" cy="185.50" r="16.5" fill="none" stroke="#e81010" stroke-width="3.4"/><circle cx="937.50" cy="185.50" r="12.8" fill="#fa0000"/><circle cx="1037.30" cy="185.50" r="16.5" fill="none" stroke="#e81010" stroke-width="3.4"/><circle cx="1037.30" cy="185.50" r="12.8" fill="#fa0000"/><circle cx="1137.10" cy="185.50" r="16.5" fill="none" stroke="#e81010" stroke-width="3.4"/><circle cx="1137.10" cy="185.50" r="12.8" fill="#fa0000"/><circle cx="338.70" cy="310.50" r="12" fill="#ffff00" stroke="#8a2c08" stroke-width="1.15"/><circle cx="438.50" cy="310.50" r="12" fill="#ffff00" stroke="#8a2c08" stroke-width="1.15"/><circle cx="538.30" cy="310.50" r="12" fill="#ffff00" stroke="#8a2c08" stroke-width="1.15"/><circle cx="638.10" cy="310.50" r="12" fill="#ffff00" stroke="#8a2c08" stroke-width="1.15"/><circle cx="737.90" cy="310.50" r="12" fill="#ffff00" stroke="#8a2c08" stroke-width="1.15"/><circle cx="837.70" cy="310.50" r="12" fill="#ffff00" stroke="#8a2c08" stroke-width="1.15"/><circle cx="937.50" cy="310.50" r="12" fill="#ffff00" stroke="#8a2c08" stroke-width="1.15"/><circle cx="1037.30" cy="310.50" r="12" fill="#ffff00" stroke="#8a2c08" stroke-width="1.15"/><circle cx="1137.10" cy="310.50" r="12" fill="#ffff00" stroke="#8a2c08" stroke-width="1.15"/><circle cx="338.70" cy="435.30" r="12" fill="#ffff00" stroke="#8a2c08" stroke-width="1.15"/><circle cx="438.50" cy="435.30" r="12" fill="#ffff00" stroke="#8a2c08" stroke-width="1.15"/><circle cx="538.30" cy="435.30" r="12" fill="#ffff00" stroke="#8a2c08" stroke-width="1.15"/><circle cx="638.10" cy="435.30" r="12" fill="#ffff00" stroke="#8a2c08" stroke-width="1.15"/><circle cx="737.90" cy="435.30" r="12" fill="#ffff00" stroke="#8a2c08" stroke-width="1.15"/><circle cx="837.70" cy="435.30" r="12" fill="#ffff00" stroke="#8a2c08" stroke-width="1.15"/><circle cx="937.50" cy="435.30" r="12" fill="#ffff00" stroke="#8a2c08" stroke-width="1.15"/><circle cx="1037.30" cy="435.30" r="12" fill="#ffff00" stroke="#8a2c08" stroke-width="1.15"/><circle cx="1137.10" cy="435.30" r="12" fill="#ffff00" stroke="#8a2c08" stroke-width="1.15"/><circle cx="338.70" cy="560.00" r="12" fill="#ffff00" stroke="#8a2c08" stroke-width="1.15"/><circle cx="438.50" cy="560.00" r="12" fill="#ffff00" stroke="#8a2c08" stroke-width="1.15"/><circle cx="538.30" cy="560.00" r="12" fill="#ffff00" stroke="#8a2c08" stroke-width="1.15"/><circle cx="638.10" cy="560.00" r="12" fill="#ffff00" stroke="#8a2c08" stroke-width="1.15"/><circle cx="737.90" cy="560.00" r="12" fill="#ffff00" stroke="#8a2c08" stroke-width="1.15"/><circle cx="837.70" cy="560.00" r="12" fill="#ffff00" stroke="#8a2c08" stroke-width="1.15"/><circle cx="937.50" cy="560.00" r="12" fill="#ffff00" stroke="#8a2c08" stroke-width="1.15"/><circle cx="1037.30" cy="560.00" r="12" fill="#ffff00" stroke="#8a2c08" stroke-width="1.15"/><circle cx="1137.10" cy="560.00" r="12" fill="#ffff00" stroke="#8a2c08" stroke-width="1.15"/><circle cx="338.70" cy="684.80" r="12" fill="#ffff00" stroke="#8a2c08" stroke-width="1.15"/><circle cx="438.50" cy="684.80" r="12" fill="#ffff00" stroke="#8a2c08" stroke-width="1.15"/><circle cx="538.30" cy="684.80" r="12" fill="#ffff00" stroke="#8a2c08" stroke-width="1.15"/><circle cx="638.10" cy="684.80" r="12" fill="#ffff00" stroke="#8a2c08" stroke-width="1.15"/><circle cx="737.90" cy="684.80" r="12" fill="#ffff00" stroke="#8a2c08" stroke-width="1.15"/><circle cx="837.70" cy="684.80" r="12" fill="#ffff00" stroke="#8a2c08" stroke-width="1.15"/><circle cx="937.50" cy="684.80" r="12" fill="#ffff00" stroke="#8a2c08" stroke-width="1.15"/><circle cx="1037.30" cy="684.80" r="12" fill="#ffff00" stroke="#8a2c08" stroke-width="1.15"/><circle cx="1137.10" cy="684.80" r="12" fill="#ffff00" stroke="#8a2c08" stroke-width="1.15"/><circle cx="338.70" cy="809.50" r="12" fill="#ffff00" stroke="#8a2c08" stroke-width="1.15"/><circle cx="438.50" cy="809.50" r="12" fill="#ffff00" stroke="#8a2c08" stroke-width="1.15"/><circle cx="538.30" cy="809.50" r="12" fill="#ffff00" stroke="#8a2c08" stroke-width="1.15"/><circle cx="638.10" cy="809.50" r="12" fill="#ffff00" stroke="#8a2c08" stroke-width="1.15"/><circle cx="737.90" cy="809.50" r="12" fill="#ffff00" stroke="#8a2c08" stroke-width="1.15"/><circle cx="837.70" cy="809.50" r="12" fill="#ffff00" stroke="#8a2c08" stroke-width="1.15"/><circle cx="937.50" cy="809.50" r="12" fill="#ffff00" stroke="#8a2c08" stroke-width="1.15"/><circle cx="1037.30" cy="809.50" r="12" fill="#ffff00" stroke="#8a2c08" stroke-width="1.15"/><circle cx="1137.10" cy="809.50" r="12" fill="#ffff00" stroke="#8a2c08" stroke-width="1.15"/><circle cx="338.70" cy="959.00" r="12" fill="#ffff00" stroke="#8a2c08" stroke-width="1.15"/><circle cx="438.50" cy="959.00" r="12" fill="#ffff00" stroke="#8a2c08" stroke-width="1.15"/><circle cx="538.30" cy="959.00" r="12" fill="#ffff00" stroke="#8a2c08" stroke-width="1.15"/><circle cx="638.10" cy="959.00" r="12" fill="#ffff00" stroke="#8a2c08" stroke-width="1.15"/><circle cx="737.90" cy="959.00" r="12" fill="#ffff00" stroke="#8a2c08" stroke-width="1.15"/><circle cx="837.70" cy="959.00" r="12" fill="#ffff00" stroke="#8a2c08" stroke-width="1.15"/><circle cx="937.50" cy="959.00" r="12" fill="#ffff00" stroke="#8a2c08" stroke-width="1.15"/><circle cx="1037.30" cy="959.00" r="12" fill="#ffff00" stroke="#8a2c08" stroke-width="1.15"/><circle cx="1137.10" cy="959.00" r="12" fill="#ffff00" stroke="#8a2c08" stroke-width="1.15"/><path d="M339.0 309.7 L317.7 103.1 M439.0 309.7 L503.1 241.8 M538.9 309.7 L580.0 233.3 M637.8 309.7 L660.9 172.1 M737.7 309.7 L655.3 205.3 M838.1 309.7 L835.1 245.6 M937.7 309.7 L933.2 238.1 M1037.6 309.7 L1037.3 207.2 M1136.5 309.7 L1123.4 236.3 M339.0 435.0 L355.0 370.5 M439.0 435.0 L440.8 349.3 M538.9 435.0 L545.3 348.2 M637.8 435.0 L613.2 358.2 M737.7 435.0 L757.1 365.7 M838.1 435.0 L853.4 352.3 M937.7 435.0 L940.3 363.4 M1037.6 435.0 L1080.1 361.2 M1136.5 435.0 L1144.5 404.0 M339.0 560.0 L258.8 420.1 M439.0 560.0 L335.3 470.1 M538.9 560.0 L497.5 504.8 M637.8 560.0 L601.2 496.2 M737.7 560.0 L686.3 481.3 M838.1 560.0 L841.8 447.0 M937.7 560.0 L915.3 491.0 M1037.6 560.0 L977.2 485.0 M1136.5 560.0 L1051.4 491.7 M339.0 684.7 L427.0 538.5 M439.0 684.5 L464.0 482.4 M538.9 684.7 L487.5 576.9 M637.8 684.7 L604.2 548.9 M737.7 684.7 L755.3 547.1 M838.1 684.7 L861.2 555.3 M937.7 684.7 L976.8 559.4 M1037.6 684.7 L1060.0 548.9 M1136.5 684.7 L1144.5 664.0 M339.0 809.3 L383.0 679.5 M439.0 809.3 L503.1 682.1 M538.9 809.3 L553.1 667.2 M637.8 809.3 L709.0 704.8 M737.7 809.3 L794.1 700.4 M838.1 809.3 L913.0 694.0 M937.7 809.3 L919.0 751.1 M1037.6 809.3 L1045.1 745.9 M1136.5 809.3 L1093.6 696.3 M339.0 958.8 L340.1 842.5 M439.0 958.8 L509.8 876.0 M538.9 958.8 L543.0 847.3 M637.8 958.8 L704.9 859.2 M737.7 958.8 L725.1 864.1 M838.1 958.8 L895.9 782.0 M937.7 958.8 L995.9 782.0 M1037.6 958.8 L1095.8 782.0 M1136.5 958.8 L1144.5 929.0 M308.4 154.2 Q317.5 165.0 325.2 175.0 M404.3 182.9 Q414.5 191.0 425.9 192.6 M493.1 134.8 Q514.5 164.0 528.5 175.5 M624.3 138.2 Q634.5 156.0 637.8 172.0 M715.0 156.1 Q720.5 166.0 728.8 174.7 M821.3 114.3 Q828.5 146.0 833.2 171.7 M895.9 115.0 Q909.5 140.0 931.3 172.8 M980.5 113.9 Q1016.5 144.0 1032.0 170.2 M1111.1 123.2 Q1120.5 149.0 1129.0 169.1" stroke="#000" stroke-width="2.2" fill="none" stroke-linecap="butt"/><path d="M2371.8 1063.3 H2521.0" stroke="#111" stroke-width="2.6"/></svg>
<span style="position:absolute;left:135.29px;top:413.92px;font-size:25.50px;font-weight:400;color:#000;letter-spacing:0.000px;white-space:pre;line-height:normal;">N</span>
<span style="position:absolute;left:135.30px;top:548.22px;font-size:25.50px;font-weight:400;color:#000;letter-spacing:0.000px;white-space:pre;line-height:normal;">S</span>
<span style="position:absolute;left:65.39px;top:481.42px;font-size:25.50px;font-weight:400;color:#000;letter-spacing:0.000px;white-space:pre;line-height:normal;">W</span>
<span style="position:absolute;left:202.41px;top:481.42px;font-size:25.50px;font-weight:400;color:#000;letter-spacing:0.000px;white-space:pre;line-height:normal;">E</span>
<span style="position:absolute;left:2438.53px;top:1396.72px;font-size:25.50px;font-weight:400;color:#000;letter-spacing:2.222px;white-space:pre;line-height:normal;">3 m</span>
<span style="position:absolute;left:41.25px;top:1381.97px;font-size:32.30px;font-weight:400;color:#808080;letter-spacing:0.107px;white-space:pre;line-height:normal;">DEVIATION TROUS</span>
<div style="position:absolute;left:14.00px;top:366.00px;width:2537.00px;height:1080.50px;box-sizing:border-box;border-right:1.6px solid #5f5f5f;border-bottom:1.8px solid #5f5f5f;border-left:1.5px solid #e8e8e8;pointer-events:none;"></div>
<div style="position:absolute;left:0.00px;top:1460.00px;width:2560.00px;height:44.00px;box-sizing:border-box;background:#f0f0f0;border-top:1.3px solid #dadada;"></div>
<div style="position:absolute;left:1130.00px;top:1462.00px;width:1.30px;height:42.00px;background:#dcdcdc;"></div>
<div style="position:absolute;left:1367.00px;top:1462.00px;width:1.30px;height:42.00px;background:#dcdcdc;"></div>
<div style="position:absolute;left:1743.50px;top:1462.00px;width:1.30px;height:42.00px;background:#dcdcdc;"></div>
<div style="position:absolute;left:1943.50px;top:1462.00px;width:1.30px;height:42.00px;background:#dcdcdc;"></div>
<div style="position:absolute;left:2159.30px;top:1462.00px;width:1.30px;height:42.00px;background:#dcdcdc;"></div>
<div style="position:absolute;left:2359.30px;top:1462.00px;width:1.30px;height:42.00px;background:#dcdcdc;"></div>
<span style="position:absolute;left:0.03px;top:1471.92px;font-size:21.30px;font-weight:400;color:#000;letter-spacing:0.216px;white-space:pre;line-height:normal;">Select top left corner of desired zone</span>
<span style="position:absolute;left:1370.03px;top:1471.92px;font-size:21.30px;font-weight:400;color:#000;letter-spacing:0.320px;white-space:pre;line-height:normal;">SELECTION : rectangle</span>
<span style="position:absolute;left:2162.03px;top:1471.92px;font-size:21.30px;font-weight:400;color:#000;letter-spacing:0.412px;white-space:pre;line-height:normal;">Scenario #0</span>
<span style="position:absolute;left:2361.03px;top:1471.92px;font-size:21.30px;font-weight:400;color:#000;letter-spacing:0.604px;white-space:pre;line-height:normal;">ISO UNITS</span>
<div style="position:absolute;left:1157.00px;top:302.00px;width:1254.00px;height:1102.50px;box-sizing:border-box;border:1.5px solid #a9a9a9;border-radius:15px;background:#f0f0f0;overflow:hidden;box-shadow:0 40px 90px -15px rgba(0,0,0,0.31);"><div style="position:absolute;left:0;top:0;right:0;height:56.5px;background:#f3f3f3"></div><div style="position:absolute;left:0;top:55.5px;right:0;height:1001.5px;background:#ffc933"></div></div>
<svg style="position:absolute;left:1171.00px;top:315.00px;" width="33.00" height="29.00" viewBox="0 0 33 29" preserveAspectRatio="none"><defs><linearGradient id="tg" x1="0.2" y1="0" x2="0.8" y2="1"><stop offset="0" stop-color="#fafafa"/><stop offset="1" stop-color="#bdbdbd"/></linearGradient></defs><path d="M16.3 4.5 L29.5 25.5 L3.2 25.5 Z" fill="url(#tg)" stroke="#ee4848" stroke-width="3" stroke-linejoin="round"/></svg>
<span style="position:absolute;left:1211.10px;top:318.80px;font-size:23.20px;font-weight:400;color:#8c8c8c;letter-spacing:0.667px;white-space:pre;line-height:normal;">Drilling Log</span>
<svg style="position:absolute;left:2160.00px;top:312.00px;" width="230.00" height="36.00" viewBox="0 0 230 36" preserveAspectRatio="none"><path d="M9 18 h20" stroke="#666" stroke-width="1.6" fill="none"/><rect x="100.8" y="8.8" width="18.4" height="18.4" rx="2.5" fill="none" stroke="#666" stroke-width="1.6"/><path d="M193.3 8.3 l19.4 19.4 M212.7 8.3 l-19.4 19.4" stroke="#666" stroke-width="1.6" fill="none"/></svg>
<svg style="position:absolute;left:2390.50px;top:1384.50px;" width="17.00" height="17.00" viewBox="0 0 17 17" preserveAspectRatio="none"><rect x="12" y="0" width="3.6" height="3.6" fill="#bdbdbd"/><rect x="6" y="6" width="3.6" height="3.6" fill="#bdbdbd"/><rect x="12" y="6" width="3.6" height="3.6" fill="#bdbdbd"/><rect x="0" y="12" width="3.6" height="3.6" fill="#bdbdbd"/><rect x="6" y="12" width="3.6" height="3.6" fill="#bdbdbd"/><rect x="12" y="12" width="3.6" height="3.6" fill="#bdbdbd"/></svg>
<span style="position:absolute;left:1180.03px;top:373.02px;font-size:20.20px;font-weight:700;color:#000;letter-spacing:2.095px;white-space:pre;line-height:normal;">1.00</span>
<div style="position:absolute;left:1198.60px;top:424.00px;width:5.20px;height:911.00px;box-sizing:border-box;background:#ffeb9c;border-left:1.1px solid #c9a340;border-right:1.4px solid #fffbd8;border-top:1px solid #c9a340;"></div>
<div style="position:absolute;left:1181.00px;top:411.00px;width:40.00px;height:14.00px;box-sizing:border-box;background:#eeeeee;border:1.2px solid;border-color:#fffde2 #ab9458 #ab9458 #fffde2;"></div>
<div style="position:absolute;left:1949.10px;top:379.50px;width:5.20px;height:163.00px;box-sizing:border-box;background:#ffeb9c;border-left:1.1px solid #c9a340;border-right:1.4px solid #fffbd8;border-top:1px solid #c9a340;"></div>
<div style="position:absolute;left:1932.00px;top:439.20px;width:40.00px;height:13.50px;box-sizing:border-box;background:#eeeeee;border:1.2px solid;border-color:#fffde2 #ab9458 #ab9458 #fffde2;"></div>
<div style="position:absolute;left:1948.60px;top:573.70px;width:5.20px;height:762.00px;box-sizing:border-box;background:#ffeb9c;border-left:1.1px solid #c9a340;border-right:1.4px solid #fffbd8;border-top:1px solid #c9a340;"></div>
<div style="position:absolute;left:1930.70px;top:1245.00px;width:40.00px;height:13.80px;box-sizing:border-box;background:#eeeeee;border:1.2px solid;border-color:#fffde2 #ab9458 #ab9458 #fffde2;"></div>
<div style="position:absolute;left:1989.00px;top:371.00px;width:1.30px;height:974.50px;background:#d9aa2b;"></div>
<div style="position:absolute;left:1990.30px;top:371.00px;width:1.30px;height:974.50px;background:#ffeeb5;"></div>
<div style="position:absolute;left:1233.90px;top:370.65px;width:681.70px;height:975.45px;box-sizing:border-box;background:#fff;border:1.4px solid #000;"></div>
<svg style="position:absolute;left:1234.50px;top:371.25px;" width="680.50" height="974.25" viewBox="0 0 680.5 974.25" preserveAspectRatio="none"><path d="M138.00 3 V972.25 M286.00 3 V972.25 M434.25 3 V972.25 M582.00 3 V972.25" stroke="#cdcdcd" stroke-width="1" stroke-dasharray="3 2" fill="none" shape-rendering="crispEdges"/><path d="M2 165.15 H678.50 M2 313.25 H678.50 M2 461.35 H678.50 M2 609.45 H678.50 M2 757.55 H678.50 M2 905.65 H678.50" stroke="#cdcdcd" stroke-width="1" stroke-dasharray="3 2" fill="none" shape-rendering="crispEdges"/><path d="M158.00 3 V972.25 M665.00 3 V972.25" stroke="#c4c4c4" stroke-width="1" fill="none" shape-rendering="crispEdges"/></svg>
<span style="position:absolute;left:1372.42px;top:377.86px;font-size:19.60px;font-weight:700;color:#c1c1c1;letter-spacing:1.609px;white-space:pre;line-height:normal;">0 m</span>
<span style="position:absolute;left:1519.97px;top:377.86px;font-size:19.60px;font-weight:700;color:#c1c1c1;letter-spacing:1.838px;white-space:pre;line-height:normal;">1 m</span>
<span style="position:absolute;left:1668.77px;top:377.86px;font-size:19.60px;font-weight:700;color:#c1c1c1;letter-spacing:1.561px;white-space:pre;line-height:normal;">2 m</span>
<span style="position:absolute;left:1816.75px;top:377.86px;font-size:19.60px;font-weight:700;color:#c1c1c1;letter-spacing:1.446px;white-space:pre;line-height:normal;">3 m</span>
<span style="position:absolute;left:1241.22px;top:390.76px;font-size:19.60px;font-weight:700;color:#c1c1c1;letter-spacing:1.759px;white-space:pre;line-height:normal;">0 m</span>
<span style="position:absolute;left:1240.77px;top:538.76px;font-size:19.60px;font-weight:700;color:#c1c1c1;letter-spacing:1.988px;white-space:pre;line-height:normal;">1 m</span>
<span style="position:absolute;left:1868.42px;top:538.76px;font-size:19.60px;font-weight:700;color:#c1c1c1;letter-spacing:0.000px;white-space:pre;line-height:normal;">-1</span>
<span style="position:absolute;left:1241.32px;top:686.86px;font-size:19.60px;font-weight:700;color:#c1c1c1;letter-spacing:1.711px;white-space:pre;line-height:normal;">2 m</span>
<span style="position:absolute;left:1868.66px;top:686.86px;font-size:19.60px;font-weight:700;color:#c1c1c1;letter-spacing:0.000px;white-space:pre;line-height:normal;">-2</span>
<span style="position:absolute;left:1241.55px;top:834.96px;font-size:19.60px;font-weight:700;color:#c1c1c1;letter-spacing:1.596px;white-space:pre;line-height:normal;">3 m</span>
<span style="position:absolute;left:1868.58px;top:834.96px;font-size:19.60px;font-weight:700;color:#c1c1c1;letter-spacing:0.000px;white-space:pre;line-height:normal;">-3</span>
<span style="position:absolute;left:1241.70px;top:983.06px;font-size:19.60px;font-weight:700;color:#c1c1c1;letter-spacing:1.519px;white-space:pre;line-height:normal;">4 m</span>
<span style="position:absolute;left:1867.98px;top:983.06px;font-size:19.60px;font-weight:700;color:#c1c1c1;letter-spacing:0.000px;white-space:pre;line-height:normal;">-4</span>
<span style="position:absolute;left:1241.40px;top:1131.16px;font-size:19.60px;font-weight:700;color:#c1c1c1;letter-spacing:1.672px;white-space:pre;line-height:normal;">5 m</span>
<span style="position:absolute;left:1868.42px;top:1131.16px;font-size:19.60px;font-weight:700;color:#c1c1c1;letter-spacing:0.000px;white-space:pre;line-height:normal;">-5</span>
<span style="position:absolute;left:1241.28px;top:1279.26px;font-size:19.60px;font-weight:700;color:#c1c1c1;letter-spacing:1.730px;white-space:pre;line-height:normal;">6 m</span>
<span style="position:absolute;left:1868.58px;top:1279.26px;font-size:19.60px;font-weight:700;color:#c1c1c1;letter-spacing:0.000px;white-space:pre;line-height:normal;">-6</span>
<svg style="position:absolute;left:1234.50px;top:371.25px;" width="680.50" height="974.25" viewBox="0 0 680.5 974.25" preserveAspectRatio="none"><path d="M148.00 24.25 H610.50 M148.00 105.50 H391.50 M148.00 194.25 H421.50 M148.00 283.25 H425.50 M148.00 371.25 H355.50 M148.00 460.50 H365.00 M148.00 548.75 H358.00 M148.00 638.25 H353.00 M148.00 726.25 H546.50 M148.00 815.00 H418.00 M148.00 867.00 H385.00" stroke="#adadad" stroke-width="1" fill="none" shape-rendering="crispEdges"/><polyline points="610.50,24.25 635.50,32.50 643.00,40.00 541.75,46.25 553.00,53.25 583.00,60.00 638.00,68.25 575.50,75.75 449.25,83.25 438.00,90.75 405.50,98.25 391.75,105.50 371.75,113.25 381.75,120.50 405.50,127.50 464.25,135.00 486.25,142.00 461.00,150.00 498.00,157.00 389.25,164.25 434.25,172.00 434.25,179.25 411.75,186.75 421.75,194.25 415.50,201.25 346.00,209.25 377.50,216.25 399.25,231.25 389.25,238.25 366.75,246.25 365.00,253.25 405.50,261.25 451.00,268.25 445.50,275.00 425.50,283.25 398.00,290.50 353.00,298.00 362.50,305.00 405.50,315.00 470.00,327.00 435.50,335.50 375.50,342.50 355.50,349.25 350.50,356.75 348.00,364.25 355.50,368.75 385.00,378.75 395.00,386.25 400.00,394.25 448.00,401.25 357.50,408.25 340.00,415.75 348.00,423.25 338.00,430.75 350.50,437.50 386.75,453.25 365.00,460.50 366.75,468.00 360.50,475.00 358.00,482.50 341.00,490.50 361.75,497.50 370.00,505.50 365.00,512.00 372.00,519.25 397.00,527.00 375.50,534.25 377.00,542.00 358.00,548.75 353.50,555.75 351.00,563.75 353.00,570.75 345.00,579.25 348.00,586.25 353.00,593.25 377.00,601.25 357.00,616.25 361.75,623.25 355.00,630.00 353.00,638.25 378.00,645.50 372.00,653.00 377.00,660.50 368.00,667.50 363.00,675.50 378.00,682.50 380.00,690.00 370.00,697.00 375.00,704.50 393.50,712.00 546.75,726.25 560.50,733.75 565.50,738.75 575.50,748.75 570.50,756.25 651.75,763.25 615.50,770.75 495.00,778.00 521.75,793.00 493.00,800.00 418.00,815.50 404.25,823.25 413.75,830.00 404.25,837.00 413.75,845.75 409.25,852.50 381.75,860.50 385.00,867.00" fill="none" stroke="#858585" stroke-width="1.1" stroke-linejoin="round"/><path d="M1.5 17.15 H679.00" stroke="#000" stroke-width="2.5"/><path d="M128.00 17.15 V867.00 H148.00 V17.15" fill="none" stroke="#000" stroke-width="1.35"/><text transform="translate(155.80 33.05) rotate(90)" font-family="Liberation Sans" font-size="17" fill="#555">0</text><text x="635.00" y="35.75" font-family="Liberation Sans" font-weight="700" font-size="19.6" fill="#c1c1c1">0</text><text transform="translate(644.00 30.25) rotate(90)" font-family="Liberation Sans" font-size="17" fill="#555">3</text></svg>
<svg style="position:absolute;left:1995.00px;top:365.00px;" width="70.00" height="60.00" viewBox="0 0 1727 1480" preserveAspectRatio="none"><path d="M330 1200 L900 640" stroke="#9c9c9c" stroke-width="235" stroke-linecap="round"/><circle cx="1120" cy="440" r="305" fill="#9c9c9c"/><circle cx="1235" cy="325" r="168" fill="#ffc933"/><path d="M1115 205 L1420 -60 L1700 200 L1405 445 Z" fill="#ffc933"/><circle cx="372" cy="1172" r="58" fill="#ffc933"/><path d="M255 215 L720 640" stroke="#3f78b2" stroke-width="78" stroke-linecap="round"/><path d="M790 710 L1310 1195" stroke="#4a8cc7" stroke-width="245" stroke-linecap="butt"/><path d="M1290 1176 L1316 1200" stroke="#4a8cc7" stroke-width="245" stroke-linecap="round"/></svg>
<div style="position:absolute;left:2294.20px;top:371.20px;width:103.30px;height:79.30px;box-sizing:border-box;background:#f9f9f9;border:1px solid #d0d0d0;"></div>
<svg style="position:absolute;left:2318.00px;top:388.00px;" width="56.00" height="46.00" viewBox="0 0 56 46" preserveAspectRatio="none"><path d="M23.5 4 h8.5 v16 h9 L27.8 33.5 L14.5 20 h9 z" fill="#2f2f2f"/><rect x="4" y="37.5" width="48" height="5.8" fill="#2f2f2f"/></svg>
<div style="position:absolute;left:2000.20px;top:461.70px;width:397.50px;height:374.50px;box-sizing:border-box;border:1.4px solid #111;"></div>
<div style="position:absolute;left:2008.70px;top:467.50px;width:25.00px;height:25.00px;box-sizing:border-box;background:#fff;border:2.5px solid;border-color:#6a6a6a #fff #fff #6a6a6a;"></div>
<span style="position:absolute;left:2040.71px;top:468.22px;font-size:21.30px;font-weight:400;color:#000;letter-spacing:0.270px;white-space:pre;line-height:normal;">With position</span>
<span style="position:absolute;left:2011.55px;top:520.22px;font-size:21.30px;font-weight:400;color:#a3a3a3;letter-spacing:0.350px;white-space:pre;line-height:normal;text-shadow:1.2px 1.2px 0 #fff3cf;">Files Coordinate system :</span>
<div style="position:absolute;left:2012.50px;top:555.50px;width:377.50px;height:38.80px;box-sizing:border-box;background:#f0f0f0;border:2px solid;border-color:#6d6d6d #fff #fff #6d6d6d;"></div>
<span style="position:absolute;left:2017.99px;top:563.22px;font-size:21.30px;font-weight:400;color:#a3a3a3;letter-spacing:0.217px;white-space:pre;line-height:normal;">32612 : WGS 84 / UTM zone 12N</span>
<div style="position:absolute;left:2016.30px;top:603.30px;width:25.50px;height:25.50px;box-sizing:border-box;background:#ffc933;border:3px solid;border-color:#a08b58 #fff2c4 #fff2c4 #a08b58;"></div>
<span style="position:absolute;left:2048.33px;top:604.52px;font-size:21.30px;font-weight:400;color:#a3a3a3;letter-spacing:0.439px;white-space:pre;line-height:normal;text-shadow:1.2px 1.2px 0 #fff3cf;">Swap X and Y</span>
<span style="position:absolute;left:2011.55px;top:657.72px;font-size:21.30px;font-weight:400;color:#a3a3a3;letter-spacing:0.334px;white-space:pre;line-height:normal;text-shadow:1.2px 1.2px 0 #fff3cf;">Blast Coordinate system :</span>
<div style="position:absolute;left:2012.50px;top:694.30px;width:377.50px;height:38.20px;box-sizing:border-box;background:#f0f0f0;border:2px solid;border-color:#6d6d6d #fff #fff #6d6d6d;"></div>
<span style="position:absolute;left:2017.99px;top:701.72px;font-size:21.30px;font-weight:400;color:#a3a3a3;letter-spacing:0.217px;white-space:pre;line-height:normal;">32612 : WGS 84 / UTM zone 12N</span>
<span style="position:absolute;left:2011.55px;top:754.52px;font-size:21.30px;font-weight:400;color:#a3a3a3;letter-spacing:0.319px;white-space:pre;line-height:normal;text-shadow:1.2px 1.2px 0 #fff3cf;">Position uncertainty (m)</span>
<div style="position:absolute;left:2296.30px;top:747.50px;width:97.50px;height:38.80px;box-sizing:border-box;background:#f0f0f0;border:2px solid;border-color:#6d6d6d #fff #fff #6d6d6d;"></div>
<div style="position:absolute;left:2298.30px;top:749.50px;width:93.50px;height:34.80px;box-sizing:border-box;border:3.5px solid #fff;background:#f0f0f0;"></div>
<span style="position:absolute;left:2344.67px;top:754.52px;font-size:21.30px;font-weight:400;color:#a3a3a3;letter-spacing:0.403px;white-space:pre;line-height:normal;">0.50</span>
<div style="position:absolute;left:2014.30px;top:791.30px;width:25.50px;height:25.50px;box-sizing:border-box;background:#ffc933;border:3px solid;border-color:#a08b58 #fff2c4 #fff2c4 #a08b58;"></div>
<span style="position:absolute;left:2045.92px;top:793.22px;font-size:21.30px;font-weight:400;color:#a3a3a3;letter-spacing:0.256px;white-space:pre;line-height:normal;text-shadow:1.2px 1.2px 0 #fff3cf;">Correct hole position</span>
<span style="position:absolute;left:2017.05px;top:868.72px;font-size:21.30px;font-weight:400;color:#000;letter-spacing:0.189px;white-space:pre;line-height:normal;">Log #2 (T525)</span>
<div style="position:absolute;left:2348.00px;top:879.30px;width:48.00px;height:11.50px;background:#e04a32;"></div>
<div style="position:absolute;left:2022.50px;top:918.00px;width:367.50px;height:5.20px;box-sizing:border-box;background:#ffeb9c;border-top:1.1px solid #c9a340;border-bottom:1.4px solid #fffbd8;border-left:1px solid #c9a340;"></div>
<div style="position:absolute;left:2200.00px;top:901.30px;width:14.00px;height:39.50px;box-sizing:border-box;background:#eeeeee;border:1.2px solid;border-color:#fffde2 #ab9458 #ab9458 #fffde2;"></div>
<div style="position:absolute;left:2022.70px;top:943.00px;width:1.30px;height:4.50px;background:#333;"></div>
<div style="position:absolute;left:2205.90px;top:943.00px;width:1.30px;height:4.50px;background:#333;"></div>
<div style="position:absolute;left:2389.70px;top:943.00px;width:1.30px;height:4.50px;background:#333;"></div>
<span style="position:absolute;left:2017.83px;top:973.72px;font-size:21.30px;font-weight:400;color:#000;letter-spacing:0.351px;white-space:pre;line-height:normal;">Smoothing length</span>
<div style="position:absolute;left:2262.50px;top:967.50px;width:137.00px;height:38.80px;box-sizing:border-box;background:#fff;border:2px solid;border-color:#6d6d6d #fff #fff #6d6d6d;"></div>
<span style="position:absolute;left:2326.38px;top:975.22px;font-size:21.30px;font-weight:400;color:#000;letter-spacing:0.382px;white-space:pre;line-height:normal;">1.00 m</span>
<span style="position:absolute;left:2012.75px;top:1034.52px;font-size:21.30px;font-weight:400;color:#000;letter-spacing:0.394px;white-space:pre;line-height:normal;">Drilling time (min) :</span>
<div style="position:absolute;left:2236.30px;top:1028.80px;width:161.20px;height:38.20px;box-sizing:border-box;background:#f0f0f0;border:2px solid;border-color:#6d6d6d #fff #fff #6d6d6d;"></div>
<div style="position:absolute;left:2238.30px;top:1030.80px;width:157.20px;height:34.20px;box-sizing:border-box;border:3.5px solid #fff;background:#f0f0f0;"></div>
<span style="position:absolute;left:2360.81px;top:1035.72px;font-size:21.30px;font-weight:400;color:#000;letter-spacing:0.694px;white-space:pre;line-height:normal;">4.9</span>
<span style="position:absolute;left:2011.55px;top:1073.22px;font-size:21.30px;font-weight:400;color:#000;letter-spacing:0.334px;white-space:pre;line-height:normal;">Parameter to display :</span>
<div style="position:absolute;left:2012.50px;top:1102.50px;width:385.00px;height:38.80px;box-sizing:border-box;background:#fff;border:2px solid;border-color:#6d6d6d #fff #fff #6d6d6d;"></div>
<span style="position:absolute;left:2016.25px;top:1108.22px;font-size:21.30px;font-weight:400;color:#000;letter-spacing:0.242px;white-space:pre;line-height:normal;">Penetration rate</span>
<div style="position:absolute;left:2364.30px;top:1106.50px;width:29.50px;height:31.00px;box-sizing:border-box;background:#e6e6e6;border:2px solid;border-color:#f7f7f7 #7a7a7a #7a7a7a #f7f7f7;"></div>
<svg style="position:absolute;left:2370.30px;top:1117.00px;" width="17.00" height="9.00" viewBox="0 0 17 9" preserveAspectRatio="none"><polygon points="0,0 17,0 8.5,9" fill="#000"/></svg>
<span style="position:absolute;left:2012.75px;top:1156.22px;font-size:21.30px;font-weight:400;color:#000;letter-spacing:0.518px;white-space:pre;line-height:normal;">Max scale :</span>
<div style="position:absolute;left:2170.50px;top:1150.50px;width:227.00px;height:39.00px;box-sizing:border-box;background:#fff;border:2px solid;border-color:#6d6d6d #fff #fff #6d6d6d;"></div>
<span style="position:absolute;left:2360.99px;top:1157.72px;font-size:21.30px;font-weight:400;color:#000;letter-spacing:0.517px;white-space:pre;line-height:normal;">3.0</span>
<div style="position:absolute;left:2022.50px;top:1226.80px;width:25.50px;height:25.50px;box-sizing:border-box;background:#fff;border:2.5px solid;border-color:#6a6a6a #fff #fff #6a6a6a;"></div>
<span style="position:absolute;left:2054.03px;top:1227.52px;font-size:21.30px;font-weight:400;color:#000;letter-spacing:0.449px;white-space:pre;line-height:normal;">Set all</span>
<svg style="position:absolute;left:2334.00px;top:1206.00px;" width="64.00" height="64.00" viewBox="0 0 64 64" preserveAspectRatio="none"><circle cx="32" cy="32" r="32" fill="#4ea83a"/><path d="M16 35 L28 46 L48 18" fill="none" stroke="#efefef" stroke-width="7.5" stroke-linejoin="miter"/></svg>
<div style="position:absolute;left:2016.30px;top:1283.00px;width:381.20px;height:1.30px;background:#d9aa2b;"></div>
<div style="position:absolute;left:2016.30px;top:1284.30px;width:381.20px;height:1.30px;background:#ffeeb5;"></div>
<div style="position:absolute;left:2016.30px;top:1298.80px;width:381.20px;height:46.70px;box-sizing:border-box;background:#f9f9f9;border:1.2px solid #a9a9a9;"></div>
<svg style="position:absolute;left:2019.00px;top:1298.00px;" width="48.00" height="48.00" viewBox="0 0 48 48" preserveAspectRatio="none"><circle cx="24" cy="24" r="24" fill="#de4a3c"/><path d="M13.5 13.5 L34.5 34.5 M34.5 13.5 L13.5 34.5" stroke="#fff" stroke-width="4.4"/></svg>
<span style="position:absolute;left:2197.65px;top:1310.14px;font-size:22.50px;font-weight:400;color:#000;letter-spacing:0.761px;white-space:pre;line-height:normal;">Delete</span>
</body></html>
